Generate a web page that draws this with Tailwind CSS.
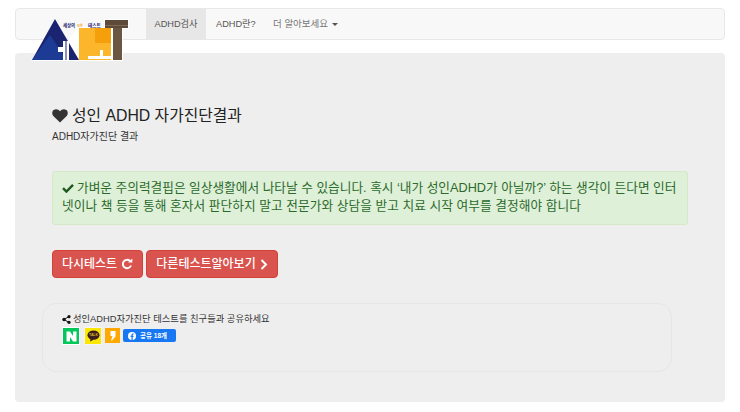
<!DOCTYPE html>
<html>
<head>
  <meta charset="utf-8">
  <meta name="viewport" content="width=device-width">
  <title>성인 ADHD 자가진단결과</title>
  <script src="https://cdn.jsdelivr.net/npm/@tailwindcss/browser@4"></script>
</head>
<body class="bg-white font-['Liberation_Sans','Noto_Sans_CJK_KR',sans-serif] text-[#333] overflow-hidden">
  <div class="px-[15px] pt-2 relative">
    <!-- logo hangs over the navbar and the grey panel -->
    <svg class="absolute left-[30px] top-[17px] z-10" width="100" height="46" viewBox="30 17 100 46">
      <!-- white edge -->
      <path d="M31 61 L55 18 L68 40 L78 27 L104 27 L104 19 L129 19 L129 29 L123 29 L123 61Z" fill="#fff"/>
      <!-- triangle -->
      <path d="M32 60 L55 19 L79 60Z" fill="#1b2470"/>
      <path d="M32 60 L50 35 L67 60Z" fill="#1d3a94"/>
      <rect x="58" y="47" width="7" height="5" fill="#fff"/>
      <rect x="63" y="41" width="6" height="19" fill="#fff"/>
      <rect x="65.500" y="41" width="1" height="19" fill="#1b2470"/>
      <!-- square -->
      <rect x="79" y="28" width="32" height="32" fill="#fbb62c"/>
      <rect x="95" y="28" width="16" height="15" fill="#f59f0b"/>
      <rect x="88" y="56" width="23" height="3" fill="#fff"/>
      <rect x="100" y="50" width="3" height="6" fill="#fff"/>
      <!-- T -->
      <rect x="105" y="20" width="23" height="8" fill="#5e4a38"/>
      <rect x="105" y="25" width="23" height="1" fill="#7d6a55"/>
      <rect x="111" y="28" width="11" height="32" fill="#6a5643"/>
      <rect x="111" y="28" width="2" height="32" fill="#fff"/>
      <text x="63" y="27" font-size="4.400" font-weight="700" fill="#1b2470">세상의</text>
      <text x="77" y="27" font-size="3.200" font-weight="700" fill="#f59f0b">모든</text>
      <text x="88" y="27" font-size="4.600" font-weight="700" fill="#1b2470">테스트</text>
    </svg>

    <nav class="h-8 flex border border-[#e7e7e7] bg-[#f8f8f8] rounded-[4px] text-[9.200px] text-[#555] leading-[30px]">
      <div class="w-[130px]"></div>
      <a class="w-[60px] text-center bg-[#e7e7e7] whitespace-nowrap">ADHD검사</a>
      <a class="ml-[10px] w-[57px] whitespace-nowrap">ADHD란?</a>
      <a class="flex items-center gap-[4px] text-[9.500px] whitespace-nowrap text-[#777]">더 알아보세요
        <span class="w-0 h-0 border-x-[3px] border-x-transparent border-t-[3px] border-t-[#555]"></span>
      </a>
    </nav>

    <main class="mt-[13px] h-[349px] rounded-[4px] bg-[#eee] pt-[53px] px-[37px]">
      <h1 class="flex items-center gap-[4px] text-[15.800px] leading-[20px] text-[#222] whitespace-nowrap">
        <svg width="16" height="14" viewBox="0 0 16 14"><path d="M8 13.500 L1.300 6.900 C-0.400 5 0 2.200 1.700 1 C3.700 -0.300 6.500 0.200 8 2.300 C9.500 0.200 12.300 -0.300 14.300 1 C16 2.200 16.400 5 14.700 6.900Z" fill="#333"/></svg>
        성인 ADHD 자가진단결과
      </h1>
      <p class="mt-[4px] text-[10px] leading-[14px]">ADHD자가진단 결과</p>

      <div class="mt-[27px] h-[54px] w-[636px] border border-[#d6e9c6] bg-[#dff0d8] rounded-[3px] px-[9px] pt-[7px] text-[12.700px] leading-[18px] text-[#2b6a2c]">
        <div class="whitespace-nowrap"><svg class="inline-block mr-[3px] align-[-1px]" width="12" height="10" viewBox="0 0 12 10"><path d="M1 5.200 L4.400 8.600 L11 1.800" fill="none" stroke="#1f5a20" stroke-width="2.400"/></svg>가벼운 주의력결핍은 일상생활에서 나타날 수 있습니다. 혹시 ‘내가 성인ADHD가 아닐까?’ 하는 생각이 든다면 인터</div>
        <div class="whitespace-nowrap tracking-[0.05px]">넷이나 책 등을 통해 혼자서 판단하지 말고 전문가와 상담을 받고 치료 시작 여부를 결정해야 합니다</div>
      </div>

      <div class="mt-[25px] flex gap-[3px]">
        <button class="h-[28px] w-[91px] flex items-center justify-center gap-[4px] rounded-[4px] border border-[#d43f3a] bg-[#d9534f] text-white text-[12px] font-medium whitespace-nowrap">다시테스트
          <svg width="12" height="12" viewBox="0 0 12 12"><path d="M10 7.500 A4.200 4.200 0 1 1 9 3" fill="none" stroke="#fff" stroke-width="1.900"/><path d="M7 4.600 L11.300 4.600 L11.300 0.500Z" fill="#fff"/></svg>
        </button>
        <button class="h-[28px] w-[132px] flex items-center justify-center gap-[4px] rounded-[4px] border border-[#d43f3a] bg-[#d9534f] text-white text-[12px] font-medium whitespace-nowrap">다른테스트알아보기
          <svg width="8" height="11" viewBox="0 0 8 11"><path d="M1.500 1 L6 5.500 L1.500 10" fill="none" stroke="#fff" stroke-width="2"/></svg>
        </button>
      </div>

      <section class="-ml-[10px] mt-[25px] w-[630px] h-[69px] border border-[#e6e6e6] rounded-[14px] pl-[19px] pt-[8px]">
        <p class="flex items-center gap-[2px] text-[9.300px] leading-[14px] text-[#333] whitespace-nowrap">
          <svg width="9" height="9" viewBox="0 0 9 9"><path d="M7 1.500 L2 4.500 L7 7.500" fill="none" stroke="#111" stroke-width="1"/><circle cx="7" cy="1.700" r="1.600" fill="#111"/><circle cx="2" cy="4.500" r="1.700" fill="#111"/><circle cx="7" cy="7.300" r="1.600" fill="#111"/></svg>
          성인ADHD자가진단 테스트를 친구들과 공유하세요
        </p>
        <div class="mt-[1px] flex items-start">
          <div class="w-[18px] h-[18px] bg-[#03c75a] border border-white flex items-center justify-center">
            <svg width="11" height="11" viewBox="0 0 11 11"><path d="M0.500 0.500 H4 L7 5 V0.500 H10.500 V10.500 H7 L4 6 V10.500 H0.500Z" fill="#fff"/></svg>
          </div>
          <div class="ml-[4px] w-[18px] h-[18px] bg-[#fae800] border border-[#f5f5f5] flex items-center justify-center">
            <svg width="13" height="12" viewBox="0 0 15 14"><ellipse cx="7.500" cy="6" rx="7" ry="5.500" fill="#3c1e1e"/><path d="M4 10 L3.500 13.500 L8 11Z" fill="#3c1e1e"/><text x="7.500" y="7.500" text-anchor="middle" font-size="4" font-weight="700" fill="#d9b820">TALK</text></svg>
          </div>
          <div class="ml-[3px] mt-[1px] w-[15px] h-[15px] bg-[#ffa800] flex items-center justify-center">
            <svg width="6" height="11" viewBox="0 0 6 11"><path d="M0.500 1 H5.500 V6.500 L2 10.500 H1 L2.500 6 H0.500Z" fill="#fff"/></svg>
          </div>
          <div class="ml-[3px] mt-[2px] w-[53px] h-[13px] rounded-[2px] bg-[#1877f2] flex items-center pl-[5px] gap-[4px] text-white text-[6.500px] font-bold whitespace-nowrap">
            <svg width="8" height="8" viewBox="0 0 8 8"><circle cx="4" cy="4" r="4" fill="#fff"/><path d="M3.500 8 V5 H2.600 V3.800 H3.500 V3 C3.500 2 4.100 1.500 5 1.500 H5.700 V2.600 H5.200 C4.800 2.600 4.700 2.800 4.700 3.100 V3.800 H5.600 L5.400 5 H4.700 V8Z" fill="#1877f2"/></svg>
            공유 18개
          </div>
        </div>
      </section>
    </main>
  </div>
</body>
</html>
